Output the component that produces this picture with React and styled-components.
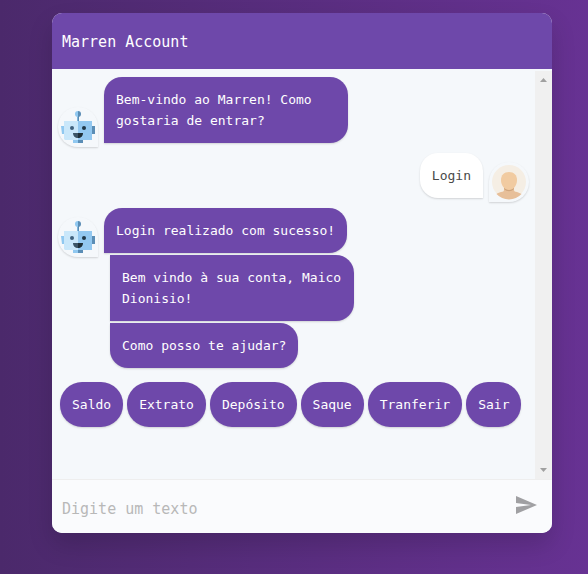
import React from "react";
import styled, { createGlobalStyle } from "styled-components";

const GlobalStyle = createGlobalStyle`
  *, *::before, *::after { box-sizing: border-box; }
  body { margin: 0; }
  body, button, input { font-family: "DejaVu Sans Mono", Consolas, monospace; }
`;

const Page = styled.main`
  display: flex;
  justify-content: center;
  min-height: 100vh;
  padding: 13px 36px 41px 52px;
  background: linear-gradient(to right, #4b296b, #673293);
`;

const Card = styled.section`
  display: flex;
  flex-direction: column;
  width: 100%;
  max-width: 500px;
  border-radius: 10px;
  overflow: hidden;
  background: #f5f8fb;
  box-shadow: 0 12px 24px rgba(0, 0, 0, 0.15);
`;

const Header = styled.header`
  display: flex;
  align-items: center;
  min-height: 56px;
  padding: 2px 10px 0;
  background: #6e48aa;
  color: #fff;
`;

const Title = styled.h1`
  margin: 0;
  font-size: 15px;
  font-weight: 400;
  line-height: 24px;
`;

const Body = styled.div`
  display: flex;
  flex: 1;
  padding-top: 2px;
`;

const Conversation = styled.div`
  display: flex;
  flex: 1;
  flex-direction: column;
  gap: 10px;
  min-width: 0;
  padding: 6px;
`;

const Group = styled.div`
  display: flex;
  flex-direction: column;
  align-items: flex-start;
  gap: 2px;
`;

const Row = styled.div`
  display: flex;
  align-self: stretch;
  align-items: flex-end;
  gap: 6px;
  flex-direction: ${(p) => (p.$user ? "row-reverse" : "row")};
`;

const Avatar = styled.div`
  flex: none;
  width: 40px;
  height: 40px;
  margin-bottom: -4px;
  border-radius: ${(p) => (p.$user ? "50% 50% 50% 0" : "50% 50% 0 50%")};
  box-shadow: 0 1px 2px rgba(0, 0, 0, 0.15);

  svg { display: block; }
`;

const corners = {
  first: "18px 18px 18px 0",
  middle: "0 18px 18px 0",
  last: "0 18px 18px 18px",
  user: "18px 18px 0 18px",
};

const Bubble = styled.p`
  max-width: 244px;
  margin: 0;
  margin-left: ${(p) => (p.$place === "middle" || p.$place === "last" ? "52px" : "0")};
  padding: 12px;
  border-radius: ${(p) => corners[p.$place]};
  background: ${(p) => (p.$place === "user" ? "#fff" : "#6e48aa")};
  color: ${(p) => (p.$place === "user" ? "#4a4a4a" : "#fff")};
  font-size: 13px;
  line-height: 21px;
  box-shadow: 0 1px 2px rgba(0, 0, 0, 0.15);
`;

const Options = styled.div`
  display: flex;
  flex-wrap: wrap;
  gap: 4px;
  padding: 4px 2px;
`;

const Option = styled.button`
  padding: 12px;
  border: 0;
  border-radius: 22px;
  background: #6e48aa;
  color: #fff;
  font-size: 13px;
  line-height: 21px;
  box-shadow: 0 1px 2px rgba(0, 0, 0, 0.15);
  cursor: pointer;
`;

const ScrollTrack = styled.div`
  display: flex;
  flex-direction: column;
  justify-content: space-between;
  width: 17px;
  background: #f0f0f0;
`;

const ScrollButton = styled.button`
  display: grid;
  place-items: center;
  height: 18px;
  padding: 0;
  border: 0;
  background: none;
`;

const Footer = styled.form`
  display: flex;
  align-items: center;
  min-height: 54px;
  border-top: 1px solid #eee;
  background: #fafbfd;
`;

const TextField = styled.input`
  flex: 1;
  min-width: 0;
  padding: 16px 10px 12px;
  border: 0;
  outline: 0;
  background: none;
  color: #4a4a4a;
  font-size: 15px;
  line-height: 24px;

  &::placeholder { color: #b8b8b8; opacity: 1; }
`;

const SendButton = styled.button`
  display: flex;
  padding: 12px 14px 16px;
  border: 0;
  background: none;
  color: #a0a0a3;
  cursor: pointer;
`;

const Robot = () => (
  <svg width="40" height="40" viewBox="0 0 40 40" role="img" aria-label="Marren">
    <path d="M19 9h1v6h-1z" fill="#7fb5dd" />
    <path d="M20 9h1v6h-1z" fill="#5b8db5" />
    <path d="M20 4a3 3 0 0 0 0 6z" fill="#90c8f0" />
    <path d="M20 4a3 3 0 0 1 0 6z" fill="#5b8db5" />
    <path d="M3 19h4v8H4z" fill="#90c8f0" />
    <path d="M33 19h4v8h-4z" fill="#5b8db5" />
    <path d="M15 33h10v3H15z" fill="#90c8f0" />
    <path d="M20 33h5v3h-5z" fill="#5b8db5" />
    <path d="M6 14h14v19H7l-1-1z" fill="#c9e7fa" />
    <path d="M20 14h14v19H20z" fill="#93c8f0" />
    <circle cx="14" cy="21" r="2" fill="#3f607d" />
    <circle cx="26" cy="21" r="2" fill="#203645" />
    <path d="M15 26h5v5c-3 0-5-2-5-5z" fill="#3c5567" />
    <path d="M20 26h5c0 3-2 5-5 5z" fill="#203038" />
  </svg>
);

const Person = () => (
  <svg width="40" height="40" viewBox="0 0 40 40" role="img" aria-label="Maico">
    <circle cx="20" cy="20" r="17" fill="#f5eee4" />
    <path d="M15 24v4c0 1-1 2-3 2-2 1-4 1-4.500 2a17 17 0 0 0 25 0c-1-1-3-1-4.500-2-2 0-3-1-3-2v-4z" fill="#e7bf99" />
    <path d="M15 25v2c3 3 7 3 10 0v-2z" fill="#cfa57d" />
    <path d="M20 10c-5 0-8 3-8 8 0 6 4 10 8 10s8-4 8-10c0-5-3-8-8-8z" fill="#f1cba1" />
  </svg>
);

const Arrow = ({ down }) => (
  <svg width="7" height="4" viewBox="0 0 7 4" aria-hidden="true">
    <path d={down ? "M0 0h7L3.500 4z" : "M0 4h7L3.500 0z"} fill="#a0a0a0" />
  </svg>
);

const BotAvatar = () => (
  <Avatar>
    <Robot />
  </Avatar>
);

const choices = ["Saldo", "Extrato", "Depósito", "Saque", "Tranferir", "Sair"];

export default function App() {
  return (
    <>
      <GlobalStyle />
      <Page>
        <Card>
          <Header>
            <Title>Marren Account</Title>
          </Header>
          <Body>
            <Conversation>
              <Row>
                <BotAvatar />
                <Bubble $place="first">Bem-vindo ao Marren! Como gostaria de entrar?</Bubble>
              </Row>
              <Row $user>
                <Avatar $user>
                  <Person />
                </Avatar>
                <Bubble $place="user">Login</Bubble>
              </Row>
              <Group>
                <Row>
                  <BotAvatar />
                  <Bubble $place="first">Login realizado com sucesso!</Bubble>
                </Row>
                <Bubble $place="middle">Bem vindo à sua conta, Maico Dionisio!</Bubble>
                <Bubble $place="last">Como posso te ajudar?</Bubble>
              </Group>
              <Options>
                {choices.map((choice) => (
                  <Option key={choice} type="button">{choice}</Option>
                ))}
              </Options>
            </Conversation>
            <ScrollTrack>
              <ScrollButton type="button" aria-label="Rolar para cima"><Arrow /></ScrollButton>
              <ScrollButton type="button" aria-label="Rolar para baixo"><Arrow down /></ScrollButton>
            </ScrollTrack>
          </Body>
          <Footer onSubmit={(e) => e.preventDefault()}>
            <TextField type="text" placeholder="Digite um texto" aria-label="Digite um texto" />
            <SendButton type="submit" aria-label="Enviar">
              <svg width="24" height="24" viewBox="0 0 24 24" fill="currentColor" aria-hidden="true">
                <path d="M2.01 21L23 12 2.01 3 2 10l15 2-15 2z" />
              </svg>
            </SendButton>
          </Footer>
        </Card>
      </Page>
    </>
  );
}
